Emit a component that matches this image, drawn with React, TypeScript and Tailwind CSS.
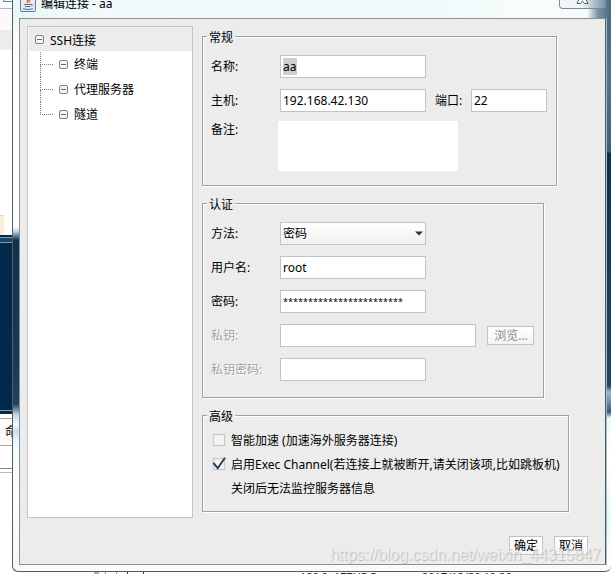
import type { ReactNode } from "react";
import clsx from "clsx";

const treeItems = ["终端", "代理服务器", "隧道"];

function ToggleIcon() {
  return (
    <svg width="10" height="10" viewBox="0 0 10 10" className="shrink-0">
      <rect x="0.5" y="0.5" width="8" height="8" rx="1.5" fill="#f6f6f6" stroke="#808080" />
      <path d="M2 4.5h5" stroke="#6a6a6a" />
    </svg>
  );
}

function JavaIcon() {
  return (
    <svg width="16" height="16" viewBox="0 0 16 16" className="shrink-0">
      <rect x="0.5" y="-2" width="15" height="17.5" rx="1.5" fill="#e4eaf0" stroke="#5f7f9c" />
      <path d="M8.6 2c1 1.8-2.6 2.4-1 4.8M10.6 3.2c-1.6 1-2.3 1.8-1 3.4" stroke="#ee7a1c" strokeWidth="1.5" fill="none" />
      <path d="M4 8.5h7M5 10.5h5M3 12.7q5 1.6 10 0M11 8.4q2.6-.2 .2 2" stroke="#4c7397" fill="none" />
    </svg>
  );
}

function Group({ title, className, children }: { title: string; className: string; children: ReactNode }) {
  return (
    <fieldset
      className={clsx(
        "border border-[#a0a0a0] shadow-[1px_1px_0_#fff,inset_1px_1px_0_#fff]",
        className,
      )}
    >
      <legend className="relative ml-1 h-[17px] bg-[#ececec] px-[2px] leading-[19px]">{title}</legend>
      {children}
    </fieldset>
  );
}

function Row({ label, disabled, children }: { label: string; disabled?: boolean; children: ReactNode }) {
  return (
    <div className="flex h-[23px] items-center pl-2">
      <span className={clsx("w-[69px] shrink-0", disabled && "text-[#a3a3a3] [text-shadow:1px_1px_0_#fff]")}>
        {label}
      </span>
      {children}
    </div>
  );
}

function Field({ className, children }: { className: string; children?: ReactNode }) {
  return (
    <div className={clsx("flex h-[23px] shrink-0 items-center border border-[#c3c3c3] bg-white pl-[2px]", className)}>
      {children}
    </div>
  );
}

function Button({ className, children }: { className?: string; children: ReactNode }) {
  return (
    <button
      className={clsx(
        "flex h-[19px] shrink-0 items-center justify-center border border-[#c3c3c3] bg-gradient-to-b from-white to-[#f4f4f4] leading-none",
        className,
      )}
    >
      {children}
    </button>
  );
}

function Check({ checked, children }: { checked?: boolean; children: ReactNode }) {
  return (
    <label className="flex h-6 items-center whitespace-nowrap">
      <svg width="14" height="14" viewBox="0 0 14 14" className="mr-[5px] shrink-0">
        <rect x="1.5" y="1.5" width="11" height="11" fill="#f4f4f4" stroke="#c8c8c8" strokeWidth="1.3" />
        {checked && (
          <path d="M1.3 5.8l4.4 5.4L13 0.8" fill="none" stroke="#263f5a" strokeWidth="2" />
        )}
      </svg>
      <span className="pt-[2px]">{children}</span>
    </label>
  );
}

function Tree() {
  return (
    <div className="h-[492px] w-[166px] shrink-0 border border-[#c3c3c3] bg-white">
      <div className="ml-px flex h-6 items-center bg-[#ececec] pt-[2px] pl-[6px]">
        <ToggleIcon />
        <span className="ml-[5px] pt-px">SSH连接</span>
      </div>
      <div className="pt-px">
        {treeItems.map((item, i) => (
          <div key={item} className="flex h-[25px] items-center pl-3">
            <div className="flex h-full w-[13px] flex-col">
              <div className="h-[13px] border-b border-l border-dotted border-[#808080]" />
              <div className={clsx("h-3", i < treeItems.length - 1 && "border-l border-dotted border-[#808080]")} />
            </div>
            <span className="ml-[6px] flex pt-px">
              <ToggleIcon />
            </span>
            <span className="ml-[5px] pt-px">{item}</span>
          </div>
        ))}
      </div>
    </div>
  );
}

function Desktop() {
  return (
    <div className="flex h-[574px] flex-col bg-white">
      <div className="h-[9px] border-b border-[#b8b8b8] bg-[#fafafa]">
        <div className="ml-[3px] h-[2px] w-[9px] border-b border-l border-[#5c8ca4]" />
      </div>
      <div className="h-[21px] bg-[#fafafa]" />
      <div className="h-[20px] bg-[#ececec]" />
      <div className="mt-[165px] h-[20px] w-1 border-t border-[#d8d8d8] bg-[#fdeedb]" />
      <div className="flex h-[179px] flex-col bg-[#02294a]">
        <div className="mt-[2px] h-[6px] w-3 border-y border-[#8399a9] bg-[#1b4461]" />
        <div className="mt-[167px] h-px w-3 bg-[#8d9aa4]" />
      </div>
      <div className="mt-[4px] h-[28px] w-3 overflow-hidden border-y border-[#a9a9a9] bg-[#fafafa] pt-[5px] pl-[5px] text-[12px] leading-4">
        命
      </div>
      <div className="mt-[22px] h-[5px] w-3 border-t border-b border-t-[#858585] border-b-[#bbb]" />
      <div className="mt-auto flex h-[3px] items-end overflow-hidden pl-[94px] text-[11px] leading-3 text-[#222]">
        <span className="h-[2px] w-[5px] bg-[#aaa]" />
        <span className="ml-[6px] h-[2px] w-3 border-x border-[#999]" />
        <span className="ml-[10px] h-[2px] w-[17px] border-x border-[#243a70]" />
        <span className="ml-[156px] h-[3px] w-[100px]">120.0, 177UDG</span>
        <span className="ml-[22px] h-[3px] w-[120px]">2017/12/20 10:26</span>
      </div>
    </div>
  );
}

function TitleBar() {
  return (
    <div className="flex h-[18px] shrink-0 items-start bg-[linear-gradient(90deg,#e7f8f9_0,#f2fafb_90px,#edf9fa_180px,#effbfb_430px,#f9fcfc_510px,#f4fcfc_574px,#7893a6_585px,#456479_599px)] pl-[7px]">
      <div className="-mt-[4px]">
        <JavaIcon />
      </div>
      <span className="-mt-[4px] ml-[5px] leading-4">编辑连接 - aa</span>
      <div className="mr-[5px] ml-auto flex h-[9px] w-[47px] items-start justify-center rounded-b-[4px] border border-t-0 border-[#7d8b93] bg-gradient-to-r from-[#f1f7f7] via-[#eef3f5] to-[#7893a6]">
        <svg width="13" height="5" viewBox="0 0 13 5">
          <path
            d="M3 -1L1 3.5h3.2L6.5 1.3 8.8 3.5H12L9.800 -1"
            fill="#fff"
            stroke="#4d5663"
          />
        </svg>
      </div>
    </div>
  );
}

export default function App() {
  return (
    <div className="relative h-[574px] w-[611px] overflow-hidden bg-white font-['Noto_Sans','Noto_Sans_CJK_SC',sans-serif] text-[12px] text-black">
      <Desktop />

      <div className="absolute top-0 left-3 flex h-[572px] w-[599px] flex-col overflow-hidden rounded-b-[6px] border-b border-l border-[#5c5c5c] bg-[#f7fbfc]">
        <TitleBar />
        <div className="flex h-[547px] shrink-0">
          <div className="w-[6px] shrink-0 bg-[linear-gradient(#ecf9fa_0,#fff_40px,#fff_209px,#b5c9da_214px,#0c3353_222px,#133b59_340px,#1c4361_386px,#c5d9ee_397px,#f3fdfe_407px,#c9daf2_413px,#effdff_425px,#fff_480px,#f6f6f6_547px)]" />

          <div className="flex w-[587px] shrink-0 gap-[9px] border border-[#8e8e8e] border-r-[#4e5a63] bg-[#ececec] pt-[7px] pl-[7px]">
            <Tree />

            <div className="flex flex-col gap-[9px] pt-[2px]">
              <Group title="常规" className="h-[158px] w-[355px]">
                <div className="mt-[10px] flex flex-col gap-[11px]">
                  <Row label="名称:">
                    <Field className="w-[146px]">
                      <span className="h-[17px] bg-[#cfcfcf] pr-px leading-[17px]">aa</span>
                    </Field>
                  </Row>
                  <Row label="主机:">
                    <Field className="w-[146px]">192.168.42.130</Field>
                    <span className="w-[45px] pl-[9px]">端口:</span>
                    <Field className="w-[76px]">22</Field>
                  </Row>
                </div>
                <div className="mt-[9px] flex pl-2">
                  <span className="w-[67px] leading-[18px]">备注:</span>
                  <div className="h-[50px] w-[180px] bg-white" />
                </div>
              </Group>

              <Group title="认证" className="h-[203px] w-[342px]">
                <div className="mt-[10px] flex flex-col gap-[11px]">
                  <Row label="方法:">
                    <div className="flex h-[23px] w-[146px] items-center justify-between border border-[#c3c3c3] bg-gradient-to-b from-white to-[#f0f0f0] pr-[2px] pl-[2px]">
                      密码
                      <svg width="8" height="5" viewBox="0 0 8 5">
                        <path d="M0 0.5h8L4 4.5z" fill="#333" />
                      </svg>
                    </div>
                  </Row>
                  <Row label="用户名:">
                    <Field className="w-[146px]">root</Field>
                  </Row>
                  <Row label="密码:">
                    <Field className="w-[146px]">
                      <span className="text-[9px] tracking-[0.04px]">************************</span>
                    </Field>
                  </Row>
                  <Row label="私钥:" disabled>
                    <Field className="w-[196px]" />
                    <Button className="ml-[11px] w-[47px] pl-px text-[#8a8a8a]">浏览...</Button>
                  </Row>
                  <Row label="私钥密码:" disabled>
                    <Field className="w-[146px]" />
                  </Row>
                </div>
              </Group>

              <Group title="高级" className="h-[105px] w-[367px]">
                <div className="mt-1 flex flex-col pl-[9px]">
                  <Check>智能加速 (加速海外服务器连接)</Check>
                  <Check checked>启用Exec Channel(若连接上就被断开,请关闭该项,比如跳板机)</Check>
                  <span className="flex h-6 items-center pt-[2px] pl-[19px]">关闭后无法监控服务器信息</span>
                </div>
              </Group>

              <div className="mt-[15px] ml-[307px] flex gap-[11px]">
                <Button className="w-[34px]">确定</Button>
                <Button className="w-[34px]">取消</Button>
              </div>
            </div>
          </div>

          <div className="flex-1 border-l border-[#a9bac5] bg-[linear-gradient(#486a80_0,#52748c_60px,#3d6079_134px,#0a304d_135px,#12395a_220px,#1d4665_368px,#9db9d4_374px,#6d8dab_384px,#35587a_394px,#e9fbfc_400px,#fff_440px,#e6fafa_500px,#fff_547px)]" />
        </div>
      </div>

      <span className="pointer-events-none absolute top-[545px] left-[330px] font-['Liberation_Sans',sans-serif] text-[16px] leading-5 tracking-[-0.04px] whitespace-nowrap text-[#f4f4f4]/70 [text-shadow:1px_1px_1px_#bbbbbb]">
        https://blog.csdn.net/weixin_44315847
      </span>
    </div>
  );
}
